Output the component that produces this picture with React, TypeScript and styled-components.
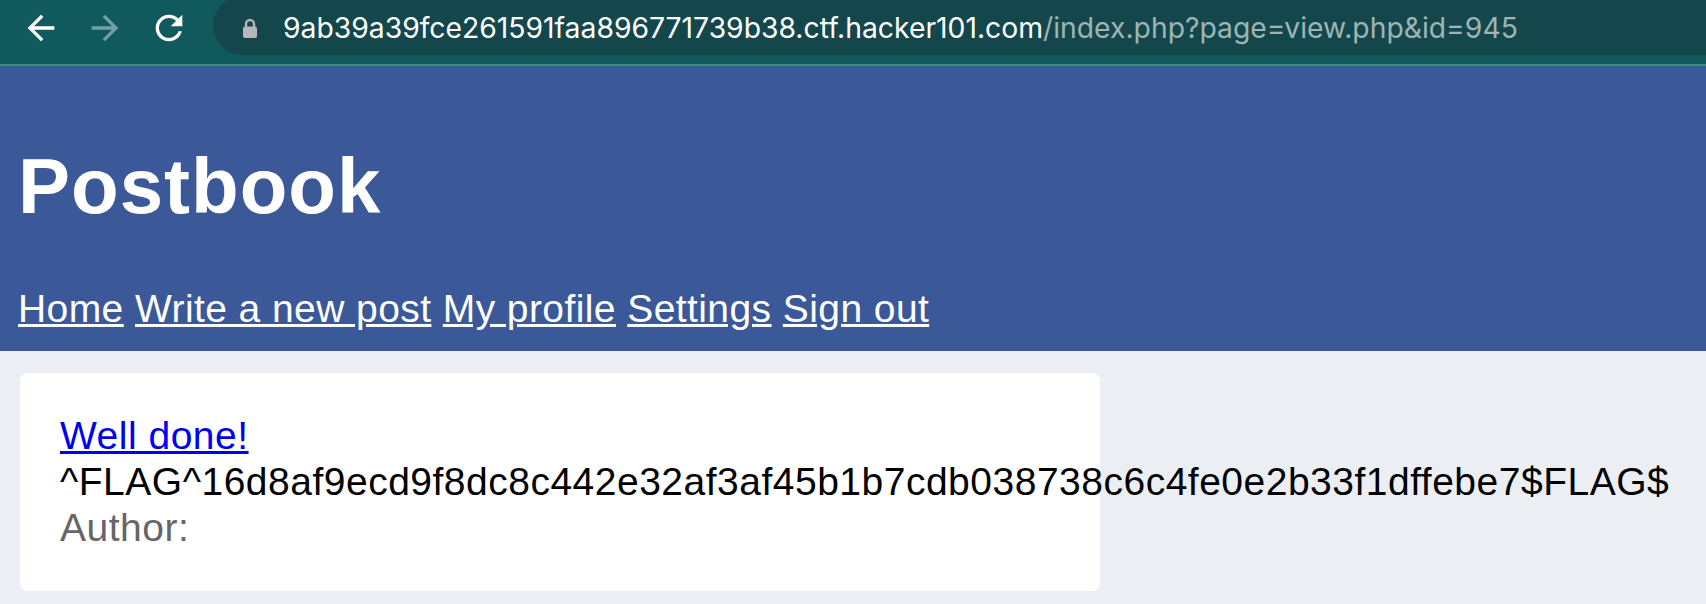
import React from "react";
import styled, { createGlobalStyle } from "styled-components";

const GlobalStyle = createGlobalStyle`
  html, body {
    margin: 0;
    padding: 0;
  }
  body {
    background: #ebeef3;
    font-family: "Liberation Sans", Arial, Helvetica, sans-serif;
    font-size: 39px;
    letter-spacing: 0.5px;
    overflow: hidden;
  }
`;

const Toolbar = styled.div`
  height: 64px;
  background: #105a5e;
  border-bottom: 2px solid #3e8983;
  display: flex;
  align-items: flex-start;
  overflow: hidden;
  letter-spacing: 0;
`;

const NavButtons = styled.div`
  display: flex;
  align-items: center;
  height: 55px;
  padding-left: 21px;
  gap: 24px;
`;

const IconButton = styled.span<{ $dim?: boolean }>`
  display: flex;
  width: 40px;
  height: 40px;
  color: #ffffff;
  opacity: ${(p) => (p.$dim ? 0.42 : 1)};
  svg {
    width: 40px;
    height: 40px;
    fill: currentColor;
  }
`;

const Omnibox = styled.div`
  flex: 1;
  margin-left: 24px;
  margin-top: -4px;
  height: 59px;
  padding: 4px 0 0 29px;
  box-sizing: border-box;
  background: #13474b;
  border-radius: 30px 0 0 30px;
  display: flex;
  align-items: center;
  gap: 25px;
`;

const Lock = styled.svg`
  width: 16px;
  height: 20px;
  flex: none;
`;

const Url = styled.span`
  font-family: Inter, "Noto Sans", sans-serif;
  font-size: 28.3px;
  white-space: nowrap;
  color: #ffffff;
`;

const UrlPath = styled.span`
  color: #9db5b5;
`;

const Header = styled.header`
  background: #3b5998;
  color: #ffffff;
  padding: 23px 18px 19px;
`;

const Title = styled.h1`
  margin: 52px 0 55px;
  font-size: 78px;
  line-height: 90px;
  font-weight: 700;
  letter-spacing: 1px;
`;

const Nav = styled.nav`
  line-height: 46px;
  white-space: nowrap;
  letter-spacing: 0.42px;
`;

const NavLink = styled.a`
  color: #ffffff;
  text-decoration: underline;
`;

const Main = styled.main`
  padding: 22px 20px 0;
`;

const Card = styled.div`
  width: 1080px;
  box-sizing: border-box;
  padding: 40px;
  background: #ffffff;
  border-radius: 8px;
  line-height: 46px;
`;

const PostLine = styled.div<{ $muted?: boolean }>`
  color: ${(p) => (p.$muted ? "#666666" : "#000000")};
  white-space: nowrap;
`;

const PostLink = styled.a`
  color: #0000ee;
  text-decoration: underline;
`;

export default function App() {
  return (
    <>
      <GlobalStyle />
      <Toolbar>
        <NavButtons>
          <IconButton>
            <svg viewBox="0 0 24 24">
              <path d="M20 11H7.83l5.59-5.59L12 4l-8 8 8 8 1.41-1.41L7.83 13H20v-2z" />
            </svg>
          </IconButton>
          <IconButton $dim>
            <svg viewBox="0 0 24 24">
              <path d="M4 11h12.17l-5.59-5.59L12 4l8 8-8 8-1.41-1.41L16.17 13H4v-2z" />
            </svg>
          </IconButton>
          <IconButton>
            <svg viewBox="0 0 24 24">
              <path d="M17.65 6.35C16.2 4.9 14.21 4 12 4c-4.42 0-7.99 3.58-7.99 8s3.57 8 7.99 8c3.73 0 6.84-2.55 7.73-6h-2.08c-.82 2.33-3.04 4-5.65 4-3.31 0-6-2.69-6-6s2.69-6 6-6c1.66 0 3.14.69 4.22 1.78L13 11h7V4l-2.35 2.35z" />
            </svg>
          </IconButton>
        </NavButtons>
        <Omnibox>
          <Lock viewBox="0 0 16 20">
            <path
              d="M4 9V6a4 4 0 0 1 8 0v3"
              fill="none"
              stroke="#b3b6ba"
              strokeWidth="2.4"
            />
            <rect x="1" y="8.5" width="14" height="11.5" rx="2" fill="#b3b6ba" />
          </Lock>
          <Url>
            9ab39a39fce261591faa896771739b38.ctf.hacker101.com
            <UrlPath>/index.php?page=view.php&amp;id=945</UrlPath>
          </Url>
        </Omnibox>
      </Toolbar>
      <Header>
        <Title>Postbook</Title>
        <Nav>
          <NavLink href="#">Home</NavLink>{" "}
          <NavLink href="#">Write a new post</NavLink>{" "}
          <NavLink href="#">My profile</NavLink>{" "}
          <NavLink href="#">Settings</NavLink>{" "}
          <NavLink href="#">Sign out</NavLink>
        </Nav>
      </Header>
      <Main>
        <Card>
          <PostLine>
            <PostLink href="#">Well done!</PostLink>
          </PostLine>
          <PostLine>
            ^FLAG^16d8af9ecd9f8dc8c442e32af3af45b1b7cdb038738c6c4fe0e2b33f1dffebe7$FLAG$
          </PostLine>
          <PostLine $muted>Author: </PostLine>
        </Card>
      </Main>
    </>
  );
}
